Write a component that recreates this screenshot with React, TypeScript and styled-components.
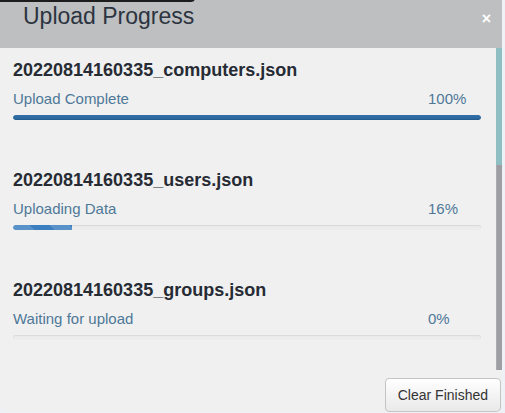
import React from "react";
import styled, { createGlobalStyle, css } from "styled-components";

const Global = createGlobalStyle`
  html, body {
    margin: 0;
    padding: 0;
    background: #eef1f6;
    font-family: "Liberation Sans", Arial, sans-serif;
  }
  * { box-sizing: border-box; }
`;

type State = "done" | "active" | "waiting";

interface Upload {
  name: string;
  status: string;
  pct: number;
  fill: number;
  state: State;
}

const uploads: Upload[] = [
  { name: "20220814160335_computers.json", status: "Upload Complete", pct: 100, fill: 100, state: "done" },
  { name: "20220814160335_users.json", status: "Uploading Data", pct: 16, fill: 12.6, state: "active" },
  { name: "20220814160335_groups.json", status: "Waiting for upload", pct: 0, fill: 0, state: "waiting" },
];

const Page = styled.div`
  position: relative;
  width: 505px;
  height: 413px;
  overflow: hidden;
`;

const Overlay = styled.div`
  position: absolute;
  left: 0;
  top: -4px;
  width: 195px;
  height: 6px;
  background: #1c1c1c;
  border-radius: 0 0 4px 0;
  z-index: 2;
`;

const Modal = styled.div`
  width: 502px;
  height: 412px;
  background: #f0f0f0;
  border-radius: 0 0 6px 6px;
  overflow: hidden;
  display: flex;
  flex-direction: column;
`;

const Header = styled.div`
  height: 48px;
  flex: none;
  background: #bebfc1;
  display: flex;
  align-items: flex-start;
  justify-content: space-between;
  padding: 2px 11px 0 23px;
`;

const Title = styled.h4`
  margin: 0;
  font-size: 23px;
  font-weight: normal;
  line-height: 28px;
  color: #2b3440;
`;

const Close = styled.button`
  border: none;
  background: none;
  padding: 0;
  margin-top: 8px;
  color: #ffffff;
  font-family: "Liberation Sans", Arial, sans-serif;
  font-weight: bold;
  font-size: 16px;
  line-height: 18px;
  cursor: pointer;
`;

const Body = styled.div`
  height: 322px;
  flex: none;
  display: flex;
  overflow: hidden;
`;

const List = styled.div`
  flex: 1;
  min-width: 0;
  padding: 12px 15px 0 13px;
`;

const Rail = styled.div`
  width: 6px;
  flex: none;
  background: #9d9ea4;
  box-shadow: inset 1px 0 0 #a9aaaf;
`;

const Thumb = styled.div`
  height: 117px;
  background: #8fbfc3;
`;

const Item = styled.div`
  display: flex;
  flex-direction: column;
  margin-bottom: 50px;
`;

const FileName = styled.div`
  font-size: 18px;
  line-height: 20px;
  font-weight: bold;
  color: #262b34;
`;

const StatusRow = styled.div`
  display: grid;
  grid-template-columns: 1fr 53px;
  margin-top: 9px;
  font-size: 15px;
  line-height: 20px;
  color: #4e7898;
`;

const Track = styled.div`
  margin-top: 6px;
  height: 5px;
  border-radius: 3px;
  background: #ececec;
  box-shadow: inset 0 1px 1px rgba(0, 0, 0, 0.08);
  overflow: hidden;
`;

const Fill = styled.div<{ $state: State }>`
  height: 100%;
  border-radius: 3px 0 0 3px;
  background-color: #2f6ea6;
  background-image: linear-gradient(to bottom, #336fa5 0%, #2c6aa1 60%, #24598a 100%);
  ${(p) =>
    p.$state === "done" &&
    css`
      border-radius: 3px;
    `}
  ${(p) =>
    p.$state === "active" &&
    css`
      background-color: #3b7fc0;
      background-image: linear-gradient(
        45deg,
        rgba(255, 255, 255, 0.15) 25%,
        transparent 25%,
        transparent 50%,
        rgba(255, 255, 255, 0.15) 50%,
        rgba(255, 255, 255, 0.15) 75%,
        transparent 75%,
        transparent
      );
      background-size: 40px 40px;
      background-position: -3px 0;
    `}
`;

const Footer = styled.div`
  flex: 1;
  display: flex;
  justify-content: flex-end;
  align-items: flex-start;
  padding: 8px 1px 0 0;
`;

const Button = styled.button`
  height: 34px;
  padding: 0 12px;
  border: 1px solid #c4c4c4;
  border-radius: 4px;
  background: linear-gradient(to bottom, #ffffff 0%, #e9e9e9 100%);
  color: #333333;
  font-family: "Liberation Sans", Arial, sans-serif;
  font-size: 14px;
  line-height: 20px;
  cursor: pointer;
`;

export default function App() {
  return (
    <Page>
      <Global />
      <Overlay />
      <Modal>
        <Header>
          <Title>Upload Progress</Title>
          <Close aria-label="Close">×</Close>
        </Header>
        <Body>
          <List>
            {uploads.map((u) => (
              <Item key={u.name}>
                <FileName>{u.name}</FileName>
                <StatusRow>
                  <span>{u.status}</span>
                  <span>{u.pct}%</span>
                </StatusRow>
                <Track>
                  {u.fill > 0 && <Fill $state={u.state} style={{ width: `${u.fill}%` }} />}
                </Track>
              </Item>
            ))}
          </List>
          <Rail>
            <Thumb />
          </Rail>
        </Body>
        <Footer>
          <Button>Clear Finished</Button>
        </Footer>
      </Modal>
    </Page>
  );
}
